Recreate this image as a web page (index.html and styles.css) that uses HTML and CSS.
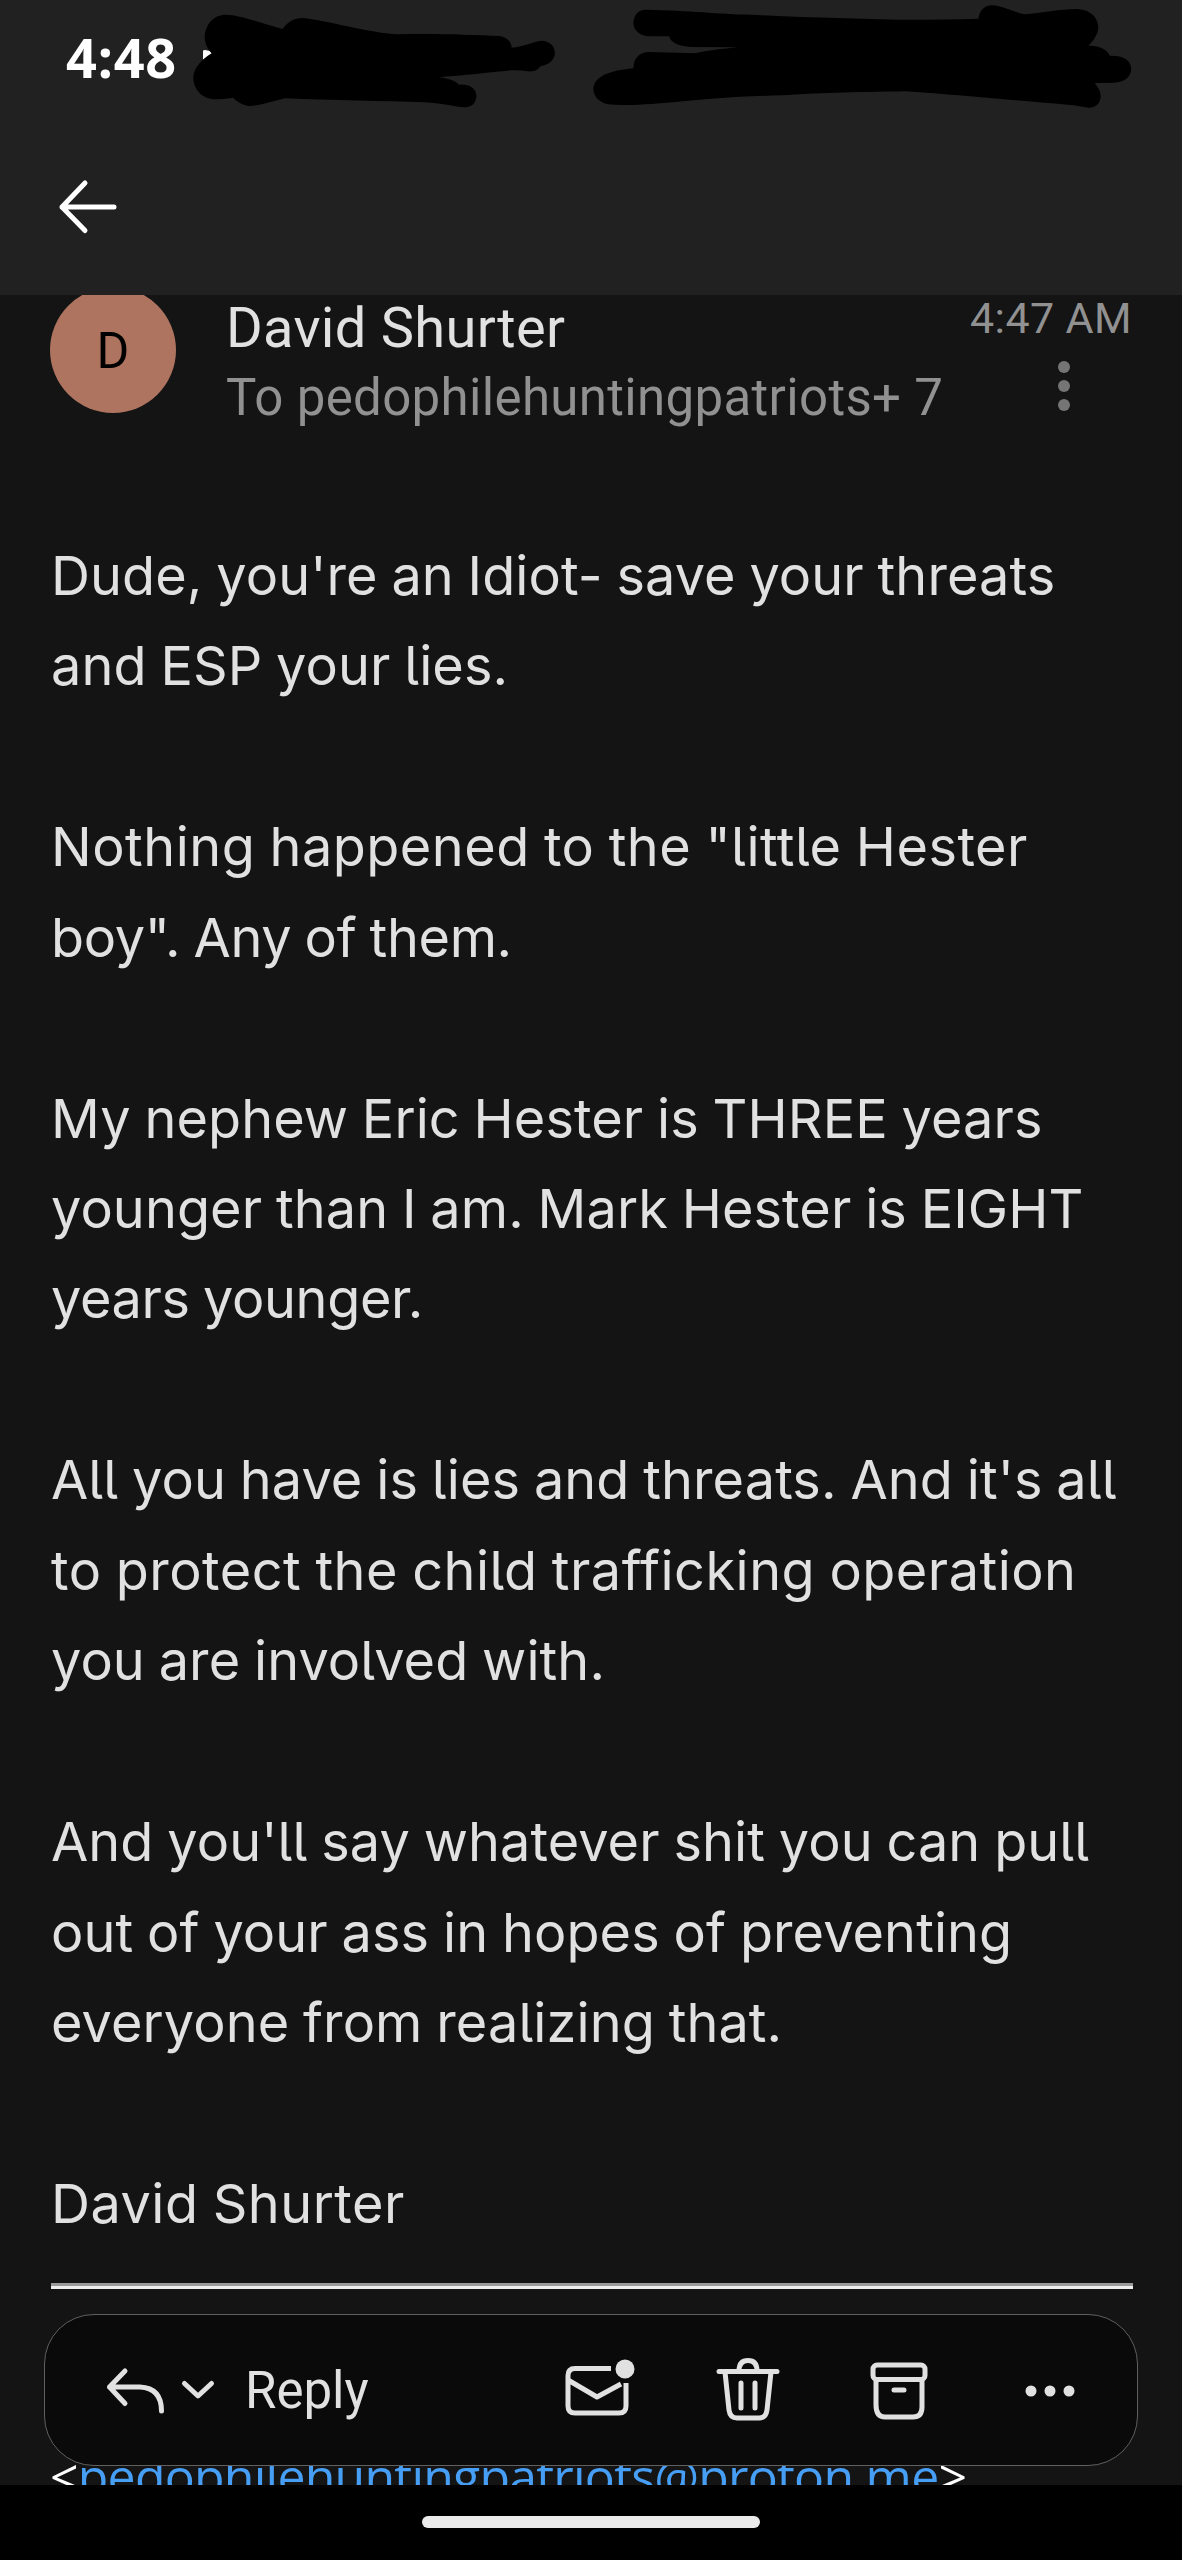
FILE: index.html
```
<!DOCTYPE html>
<html lang="en">
  <head>
    <meta charset="UTF-8" />
    <meta name="viewport" content="width=device-width, initial-scale=1.0" />
    <title>Mail</title>
    <link rel="stylesheet" href="styles.css">
  </head>
  <body>
    <div class="screen">
      <header class="topbar">
        <div class="status">4:48</div>
        <!-- marker strokes over the status bar -->
        <svg class="marker" viewBox="0 0 1182 120">
          <path d="M203 51q0-1 2-1l5 1 2 3-9 6z" fill="#fff" />
          <path transform="scale(.3827 .3333)" d="M590 44C625 44 690 72 738 87C752 65 770 54 790 54C850 60 960 98 1040 103C1130 100 1230 104 1306 108C1325 112 1336 125 1337 143C1370 141 1395 122 1420 122C1440 126 1450 142 1450 160C1449 180 1435 194 1412 199C1405 212 1392 216 1378 214C1350 208 1320 212 1290 216C1240 223 1200 226 1147 232C1175 236 1190 243 1199 254C1228 252 1244 266 1245 288C1244 310 1232 322 1213 322C1190 321 1160 310 1110 307C1000 303 870 301 745 295C715 303 680 317 652 318C635 316 620 306 609 293C590 296 575 298 560 298C525 296 505 265 505 232C506 205 525 180 553 160C542 145 535 130 535 110C537 70 560 44 590 44Z" />
          <path transform="translate(560 0) scale(.3967 .3333)" d="M215 29C330 32 400 42 480 44C600 52 720 55 850 59C920 60 990 58 1055 56C1058 30 1070 16 1090 16C1115 18 1145 36 1170 43C1215 39 1260 27 1305 27C1340 30 1357 55 1357 85C1355 105 1345 122 1332 137C1362 136 1380 150 1386 167C1420 166 1440 180 1440 208C1438 230 1425 248 1395 248L1348 249C1358 265 1363 275 1363 292C1361 312 1350 323 1333 323C1315 320 1300 315 1280 314C1130 300 1010 285 870 274C740 276 640 280 560 286C450 289 370 297 310 304C250 311 200 316 150 315L120 313C98 306 84 290 84 265C88 230 120 213 185 205C185 175 200 156 225 156L340 160C380 150 420 145 447 142L335 141C300 140 280 130 275 109L225 109C200 107 185 90 185 68C186 45 198 29 215 29Z" />
        </svg>
        <svg class="back" viewBox="0 0 64 64">
          <path d="M29 8 6 32 29 55.500M6 32H58" />
        </svg>
      </header>

      <main class="mail">
        <section class="sender">
          <div class="avatar">D</div>
          <div class="names">
            <div class="from">David Shurter</div>
            <div class="to">To pedophilehuntingpatriots+ 7</div>
          </div>
          <div class="meta">
            <div class="time">4:47 AM</div>
            <div class="kebab"><i></i><i></i><i></i></div>
          </div>
        </section>

        <article class="message">
          <p>Dude, you're an Idiot- save your threats<br />and ESP your lies.</p>
          <p><span class="wide">Nothing happened to the "little Hester</span><br /><span class="tight">boy". Any of them.</span></p>
          <p>My nephew Eric Hester is THREE years<br />younger than I am. Mark Hester is EIGHT<br /><span class="tight">years younger.</span></p>
          <p>All you have is lies and threats. And it's all<br /><span class="wide">to protect the child trafficking operation</span><br />you are involved with.</p>
          <p>And you'll say whatever shit you can pull<br />out of your ass in hopes of preventing<br />everyone from realizing that.</p>
          <p><span class="wide">David Shurter</span></p>
        </article>
        <hr />
        <div class="quoted">&lt;<a>pedophilehuntingpatriots@proton.me</a>&gt;</div>
      </main>

      <div class="toolbar">
        <svg class="icon reply" viewBox="0 0 60 50">
          <path d="M20 6 4.500 22 20 38.500M4.500 22H35Q56.500 23 56.500 46" />
        </svg>
        <svg class="icon chevron" viewBox="0 0 32 20">
          <path d="M2.500 3.500 16 16 29.500 3.500" />
        </svg>
        <span class="label">Reply</span>
        <div class="actions">
          <svg class="icon" viewBox="0 0 72 72">
            <path class="flat" d="M50 14.500H14Q7 14.500 7 21.500V52Q7 59 14 59H58Q65 59 65 52V29M7 26 36 43 60 30" />
            <circle class="dot" cx="64" cy="15" r="9.500" />
          </svg>
          <svg class="icon" viewBox="0 0 72 72">
            <path d="M7 17.500H65M27 17Q27 6.500 36 6.500T45 17M13 18 17 56Q18 64 25 64H47Q54 64 55 56L59 18M29 29V54M43 29V54" />
          </svg>
          <svg class="icon" viewBox="0 0 72 72">
            <rect x="10" y="11" width="52" height="14.500" rx="4" />
            <path d="M13 27V51Q13 63 22 63H50Q59 63 59 53V27M31 36H41" />
          </svg>
          <svg class="icon" viewBox="0 0 72 72">
            <circle class="dot" cx="17" cy="37" r="5.500" />
            <circle class="dot" cx="36" cy="37" r="5.500" />
            <circle class="dot" cx="55" cy="37" r="5.500" />
          </svg>
        </div>
      </div>

      <footer class="navbar"><div class="pill"></div></footer>
    </div>
  </body>
</html>
```
FILE: styles.css
```
* {
  box-sizing: border-box;
  margin: 0;
  padding: 0;
}
body {
  background: #141414;
  font-family: Roboto, sans-serif;
}
.screen {
  position: relative;
  display: flex;
  flex-direction: column;
  height: 2560px;
  overflow: hidden;
}

/* Header */
.topbar {
  position: relative;
  flex: none;
  height: 295px;
  padding: 20px 55px 0 66px;
  background: #212121;
}
.status {
  height: 74px;
  line-height: 74px;
  font-family: "Noto Sans", sans-serif;
  font-size: 54px;
  font-weight: 700;
  letter-spacing: 0.8px;
  color: #fff;
}
.marker {
  position: absolute;
  left: 0;
  top: 0;
  width: 1182px;
  height: 120px;
}
.back {
  display: block;
  width: 64px;
  height: 64px;
  margin: 81px 0 0 -10px;
  fill: none;
  stroke: #fff;
  stroke-width: 5;
  stroke-linecap: round;
  stroke-linejoin: round;
}

/* Mail */
.mail {
  flex: none;
  height: 2190px;
  padding: 0 50px;
  overflow: hidden;
}
.sender {
  display: flex;
  height: 236px;
}
.avatar {
  flex: none;
  width: 126px;
  height: 126px;
  margin-top: -8px;
  border-radius: 50%;
  background: #ae745f;
  color: #000;
  font-size: 50px;
  line-height: 128px;
  text-align: center;
}
.names {
  flex: 1;
  margin-left: 50px;
  white-space: nowrap;
}
.from {
  height: 68px;
  line-height: 66px;
  font-size: 56px;
  letter-spacing: 0.3px;
  color: #e1e1e1;
}
.to {
  line-height: 70px;
  font-size: 51px;
  letter-spacing: 0.34px;
  color: #919191;
}
.meta {
  display: flex;
  flex-direction: column;
  align-items: flex-end;
}
.time {
  line-height: 46px;
  font-size: 43px;
  letter-spacing: 0.4px;
  color: #919191;
  white-space: nowrap;
}
.kebab {
  display: flex;
  flex-direction: column;
  gap: 7px;
  margin: 20px 62px 0 0;
}
.kebab i {
  width: 12px;
  height: 12px;
  border-radius: 50%;
  background: #757575;
}
.message {
  padding-left: 1px;
  font-family: Inter, sans-serif;
  font-feature-settings: "cv05";
  font-size: 54px;
  line-height: 90.430px;
  letter-spacing: 0.1px;
  word-spacing: -1.500px;
  color: #e1e1e1;
  white-space: nowrap;
}
.message p {
  margin-bottom: 90.430px;
}
.message p:last-child {
  margin-bottom: 0;
}
.wide {
  letter-spacing: 0.5px;
}
.tight {
  letter-spacing: -0.350px;
}
hr {
  height: 6px;
  margin: 34px -1px 0 1px;
  border: 0;
  border-top: 3px solid #9a9a9a;
  border-bottom: 3px solid #eee;
}
.quoted {
  margin-top: 142px;
  font-family: "Open Sans", sans-serif;
  font-size: 50px;
  letter-spacing: -0.780px;
  line-height: 90px;
  color: #fff;
  white-space: nowrap;
}
.quoted a {
  color: #479ef5;
}

/* Floating toolbar */
.toolbar {
  position: absolute;
  left: 44px;
  top: 2314px;
  display: flex;
  align-items: center;
  width: 1094px;
  height: 152px;
  padding: 0 51px 0 60px;
  border: 1.500px solid #606060;
  border-radius: 50px;
  background: #0a0a0a;
}
.icon {
  flex: none;
  width: 72px;
  height: 72px;
  overflow: visible;
  fill: none;
  stroke: #e1e1e1;
  stroke-width: 5;
  stroke-linecap: round;
  stroke-linejoin: round;
}
.icon .flat {
  stroke-linecap: butt;
}
.icon .dot {
  fill: #e1e1e1;
  stroke: none;
}
.reply {
  width: 60px;
  height: 50px;
}
.chevron {
  width: 32px;
  height: 20px;
  margin-left: 17px;
}
.label {
  margin: 1px 0 0 31px;
  font-size: 51px;
  color: #e1e1e1;
}
.actions {
  display: flex;
  gap: 79px;
  margin-left: auto;
}

/* System navigation */
.navbar {
  display: flex;
  flex: 1;
  justify-content: center;
  padding-top: 31px;
  background: #000;
}
.pill {
  width: 338px;
  height: 12px;
  border-radius: 6px;
  background: #ebebeb;
}
```
